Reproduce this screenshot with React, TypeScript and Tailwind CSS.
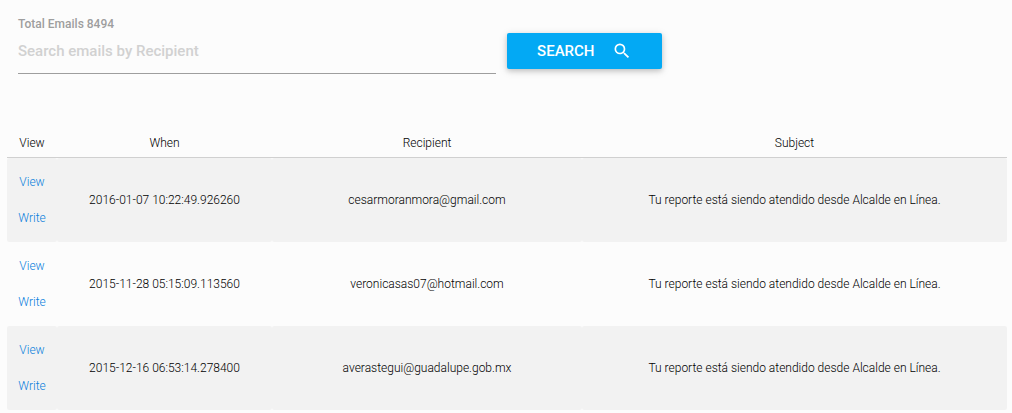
import React from "react";
import { MdSearch } from "react-icons/md";

type Email = { when: string; recipient: string; subject: string };

const emails: Email[] = [
  {
    when: "2016-01-07 10:22:49.926260",
    recipient: "cesarmoranmora@gmail.com",
    subject: "Tu reporte está siendo atendido desde Alcalde en Línea.",
  },
  {
    when: "2015-11-28 05:15:09.113560",
    recipient: "veronicasas07@hotmail.com",
    subject: "Tu reporte está siendo atendido desde Alcalde en Línea.",
  },
  {
    when: "2015-12-16 06:53:14.278400",
    recipient: "averastegui@guadalupe.gob.mx",
    subject: "Tu reporte está siendo atendido desde Alcalde en Línea.",
  },
];

function SearchForm() {
  return (
    <form className="flex items-start gap-[11px] pl-[18px]" onSubmit={(e) => e.preventDefault()}>
      <div className="flex w-[48.1%] flex-col pt-4">
        <label htmlFor="recipient" className="text-xs leading-4 font-medium text-[#9e9e9e]">
          Total Emails 8494
        </label>
        <input
          id="recipient"
          type="text"
          placeholder="Search emails by Recipient"
          className="h-[42px] w-full rounded-none border-b border-[#9e9e9e] bg-transparent pb-1 text-[15px] font-medium text-gray-800 outline-none placeholder:text-[#d1d1d1] placeholder:opacity-100"
        />
      </div>
      <button
        type="submit"
        className="mt-[33px] flex h-9 items-center gap-[17px] rounded-xs bg-[#03a9f4] px-[30px] text-[15px] font-medium text-white uppercase shadow-[0_2px_5px_0_rgba(0,0,0,0.16),0_2px_10px_0_rgba(0,0,0,0.12)]"
      >
        Search
        <MdSearch className="size-5" aria-hidden="true" />
      </button>
    </form>
  );
}

function EmailRow({ email }: { email: Email }) {
  return (
    <tr className="group">
      <td className="rounded-xs py-[6px] group-odd:bg-[#f2f2f2]">
        <a href="#view" className="block leading-9 text-[#0a7fdc]">
          View
        </a>
        <a href="#write" className="block leading-9 text-[#0a7fdc]">
          Write
        </a>
      </td>
      <td className="rounded-xs group-odd:bg-[#f2f2f2]">{email.when}</td>
      <td className="rounded-xs group-odd:bg-[#f2f2f2]">{email.recipient}</td>
      <td className="rounded-xs group-odd:bg-[#f2f2f2]">{email.subject}</td>
    </tr>
  );
}

export default function App() {
  return (
    <main className="min-h-screen bg-[#fcfcfc] font-[Roboto,sans-serif] text-black">
      <SearchForm />
      <div className="pt-[54px] pr-[5px] pl-[7px]">
        <table className="w-full table-fixed border-separate border-spacing-0 text-center text-[12px] font-light">
          <colgroup>
            <col className="w-[5%]" />
            <col className="w-[21.5%]" />
            <col className="w-[31%]" />
            <col className="w-[42.5%]" />
          </colgroup>
          <thead>
            <tr className="h-[30px]">
              <th className="border-b border-[#d0d0d0] pt-px font-light">View</th>
              <th className="border-b border-[#d0d0d0] pt-px font-light">When</th>
              <th className="border-b border-[#d0d0d0] pt-px font-light">Recipient</th>
              <th className="border-b border-[#d0d0d0] pt-px font-light">Subject</th>
            </tr>
          </thead>
          <tbody>
            {emails.map((email) => (
              <EmailRow key={email.when} email={email} />
            ))}
          </tbody>
        </table>
      </div>
    </main>
  );
}
